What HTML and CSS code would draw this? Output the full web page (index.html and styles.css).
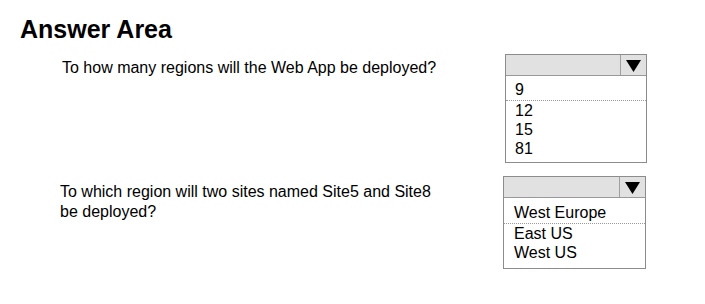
FILE: index.html
```html
<!DOCTYPE html>
<html lang="en">
<head>
    <meta charset="UTF-8">
    <meta name="viewport" content="width=device-width, initial-scale=1.0">
    <title>Answer Area</title>
    <link rel="stylesheet" href="styles.css">
</head>
<body>
    <div class="container">
        <h1>Answer Area</h1>

        <!-- Question 1 -->
        <div class="row row-first">
            <p class="question">To how many regions will the Web App be deployed?</p>
            <div class="select">
                <div class="select-head">
                    <span class="select-value"></span>
                    <span class="arrow-cell">
                        <svg width="15" height="12" viewBox="0 0 15 12"><polygon points="0,0 15,0 7.5,12" fill="#000"/></svg>
                    </span>
                </div>
                <ul class="options options-first">
                    <li class="selected">9</li>
                    <li>12</li>
                    <li>15</li>
                    <li>81</li>
                </ul>
            </div>
        </div>

        <!-- Question 2 -->
        <div class="row row-second">
            <p class="question">To which region will two sites named Site5 and Site8<br>be deployed?</p>
            <div class="select">
                <div class="select-head">
                    <span class="select-value"></span>
                    <span class="arrow-cell">
                        <svg width="15" height="12" viewBox="0 0 15 12"><polygon points="0,0 15,0 7.5,12" fill="#000"/></svg>
                    </span>
                </div>
                <ul class="options options-second">
                    <li class="selected">West Europe</li>
                    <li>East US</li>
                    <li>West US</li>
                </ul>
            </div>
        </div>
    </div>
</body>
</html>
```

FILE: styles.css
```css
/* General Styles */
* {
    margin: 0;
    padding: 0;
    box-sizing: border-box;
}

body {
    font-family: "Liberation Sans", Arial, sans-serif;
    background-color: #fff;
    color: #000;
}

.container {
    padding: 15px 0 0 20px;
}

h1 {
    font-size: 25px;
    font-weight: bold;
    line-height: 29px;
    margin-bottom: 10px;
}

/* Question rows */
.row {
    display: grid;
    grid-template-columns: 443px 143px;
    padding-left: 40px;
}

.row-first {
    margin-left: 2px;
}

.row-second {
    margin-top: 13px;
}

.question {
    font-size: 16px;
    line-height: 20px;
}

.row-first .question {
    padding-top: 4px;
}

.row-second .question {
    padding-top: 6px;
}

/* Dropdown */
.select {
    border: 1px solid #8c8c8c;
    background-color: #fff;
}

.row-first .select {
    width: 142px;
}

.select-head {
    display: flex;
    height: 21px;
    background-color: #e1e1e1;
    border-bottom: 1px solid #999;
}

.select-value {
    flex: 1;
}

.arrow-cell {
    width: 26px;
    border-left: 1px solid #a0a0a0;
    display: flex;
    justify-content: center;
    padding-top: 5px;
}

.options {
    list-style: none;
    font-size: 16px;
    line-height: 19px;
    padding-left: 9px;
}

.options li.selected {
    border-bottom: 1px dotted #9a9a9a;
    margin-left: -9px;
    padding-left: 9px;
}

.options-first {
    padding-bottom: 4px;
}

.options-first li.selected {
    padding-top: 4px;
    padding-bottom: 1px;
}

.options-second {
    padding-left: 10px;
    padding-bottom: 6px;
}

.options-second li.selected {
    margin-left: -10px;
    padding-left: 10px;
    padding-top: 5px;
    padding-bottom: 1px;
}
```
